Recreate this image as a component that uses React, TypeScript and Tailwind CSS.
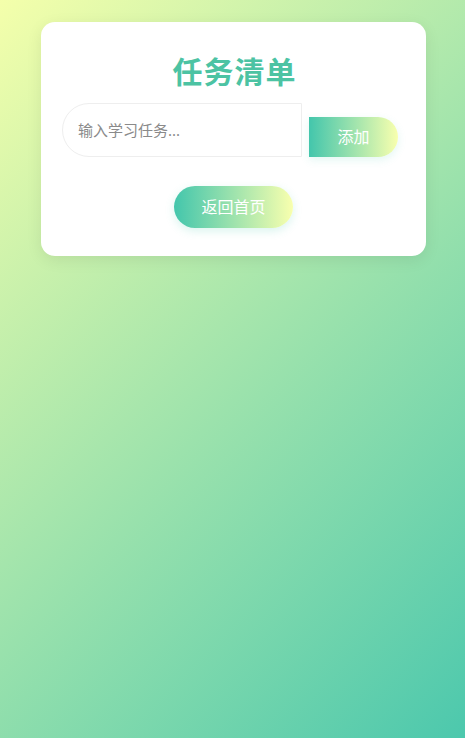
import React from "react";

export default function App() {
  return (
    <div
      className="min-h-[738px] w-full bg-[linear-gradient(135deg,#f4ffab_0%,#4cc8ad_100%)] pt-[22px] pl-[41px] pr-[39px]"
      style={{ fontFamily: '"Noto Sans", "Noto Sans CJK SC", sans-serif' }}
    >
      <div className="w-[385px] rounded-[14px] bg-white shadow-[0_4px_16px_rgba(0,0,0,0.08)] pt-[32px] pb-[28px] px-[21px] flex flex-col items-center">
        <h1 className="text-[30px] leading-[36px] font-bold text-[#4cc3a3] tracking-[1px] ml-[2px]">任务清单</h1>
        <div className="mt-[13px] flex items-end self-start">
          <input
            placeholder="输入学习任务..."
            className="w-[240px] h-[54px] rounded-l-full border border-[#eeeeee] pl-[15px] text-[15px] text-[#555] placeholder:text-[#8a8a8a] outline-none"
          />
          <button className="ml-[7px] w-[89px] h-[40px] rounded-r-full bg-[linear-gradient(to_right,#43c6ac,#f8ffae)] text-white text-[16px] shadow-[0_3px_8px_rgba(67,198,172,0.15)]">
            添加
          </button>
        </div>
        <button className="mt-[29px] w-[119px] h-[42px] rounded-full bg-[linear-gradient(to_right,#43c6ac,#f8ffae)] text-white text-[16px] shadow-[0_3px_10px_rgba(67,198,172,0.2)]">
          返回首页
        </button>
      </div>
    </div>
  );
}
